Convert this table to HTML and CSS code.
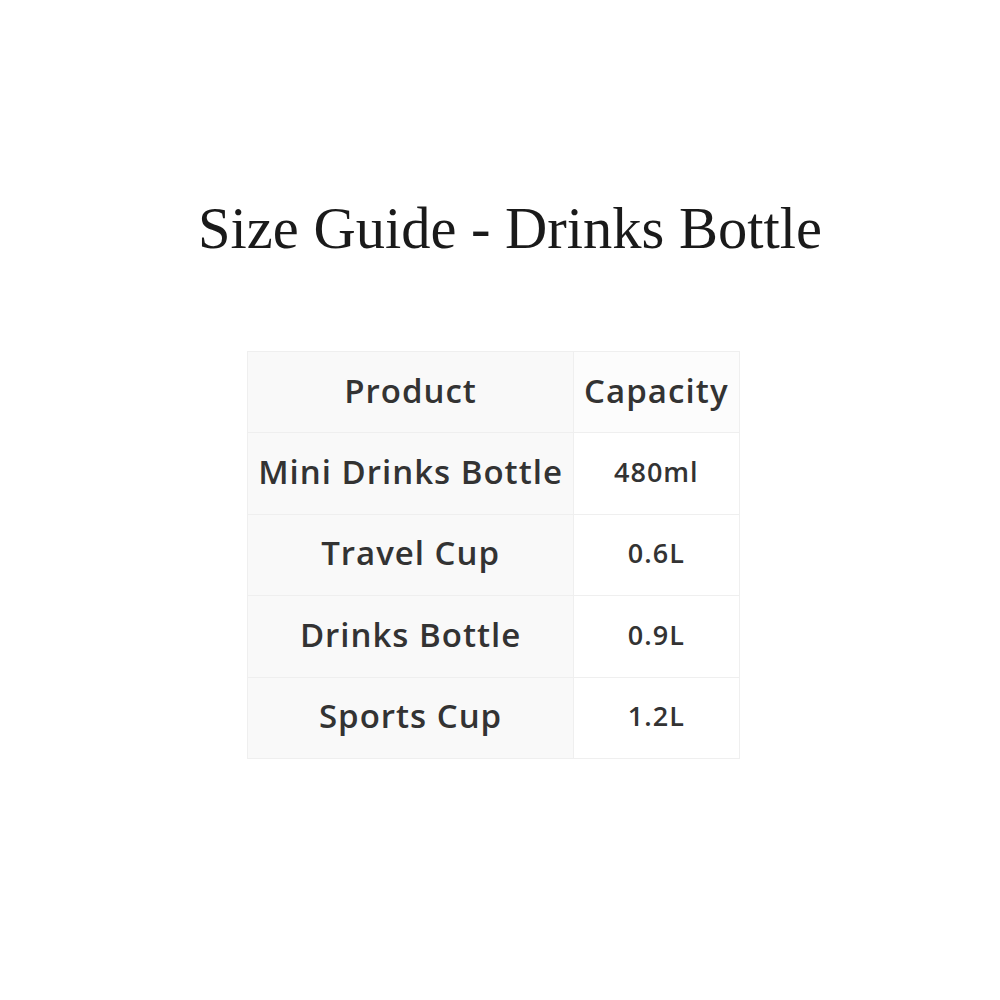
FILE: index.html
```html
<!DOCTYPE html>
<html>
<head>
<meta charset="utf-8">
<link rel="stylesheet" href="styles.css">
</head>
<body>
<main class="page">
  <h1 class="title">Size Guide - Drinks Bottle</h1>
  <table class="guide">
    <tr><th class="c1">Product</th><th class="c2">Capacity</th></tr>
    <tr><td class="c1">Mini Drinks Bottle</td><td class="c2">480ml</td></tr>
    <tr><td class="c1">Travel Cup</td><td class="c2">0.6L</td></tr>
    <tr><td class="c1">Drinks Bottle</td><td class="c2">0.9L</td></tr>
    <tr><td class="c1">Sports Cup</td><td class="c2">1.2L</td></tr>
  </table>
</main>
</body>
</html>
```
FILE: styles.css
```css
html, body { margin: 0; padding: 0; background: #fff; }
.page {
  width: 1000px;
  height: 1000px;
  display: flex;
  flex-direction: column;
  align-items: center;
}
.title {
  margin: 193px 0 0 20px;
  font-family: "Liberation Serif", serif;
  font-weight: normal;
  font-size: 58.5px;
  line-height: 72px;
  color: #1a1a1a;
}
.guide {
  margin: 86px 0 0 -13px;
  border-collapse: collapse;
  font-family: "Open Sans", sans-serif;
  color: #333;
  letter-spacing: 1.1px;
}
.guide th, .guide td {
  border: 1px solid #efefef;
  height: 76.4px;
  padding: 0 10px 4px;
  text-align: center;
  font-weight: 600;
}
.c1 { background: #f9f9f9; font-size: 33px; letter-spacing: 1px; }
th.c2 { font-size: 33px; background: #fcfcfc; }
td.c2 { font-size: 27px; letter-spacing: 1px; background: #fff; }
```
